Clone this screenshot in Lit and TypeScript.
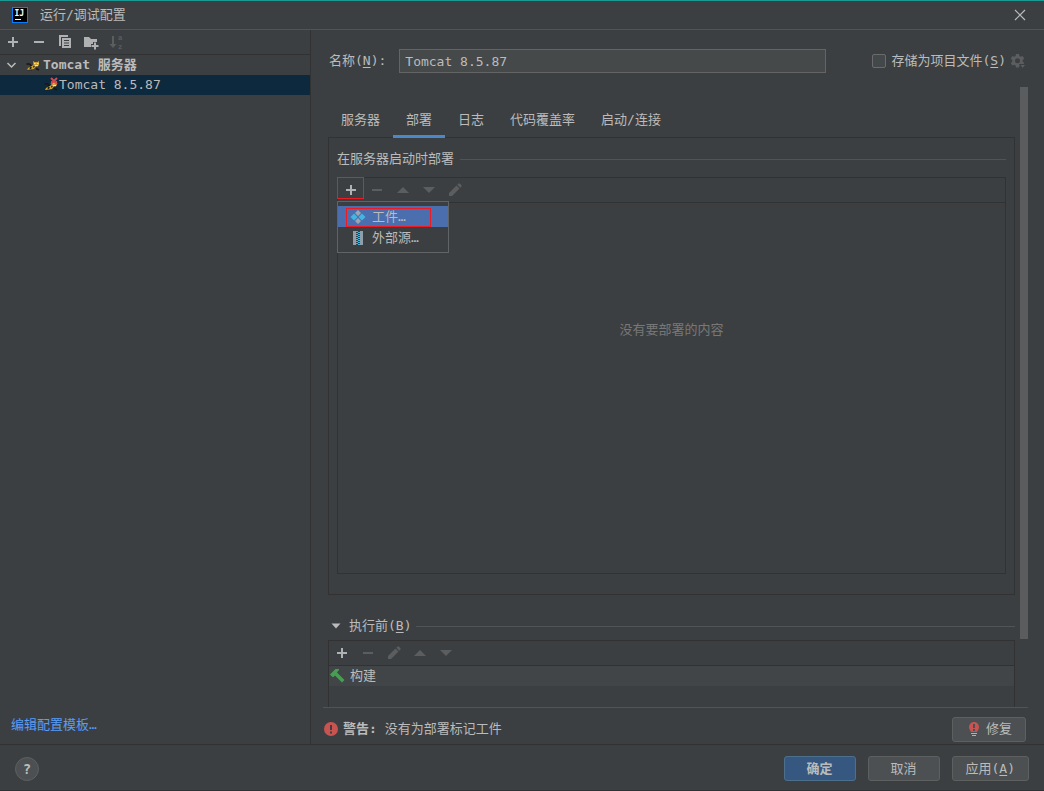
import { LitElement, html, css, svg } from "lit";
import { customElement, property, state } from "lit/decorators.js";
import { classMap } from "lit/directives/class-map.js";

const cat = svg`<path fill="none" stroke="#1b1710" stroke-width="1.500" d="M1.500 7h3l2 2M2 12.500h5M11 11.500l3 1.500"/><path fill="#cfa235" d="M8 4l1.500 1h3L14 4v4l-1.500 1.500H11L9 12l-3 .5-4 .5 1-2 4-2 1.500-1.500z"/><path fill="#2a2315" d="M5 9.500l2 1-1 1.500-1.500.3zM8 8.500l2 1-1.500 1.500z"/><path fill="#f4e6a6" d="M9 6h1.500v1H9zM12 6h1.500v1H12zM10 8h3v1h-3z"/>`;

const icons: Record<string, unknown> = {
  add: svg`<path fill="currentColor" d="M7 3h2v4h4v2H9v4H7V9H3V7h4z"/>`,
  remove: svg`<path fill="currentColor" d="M3 7h10v2H3z"/>`,
  up: svg`<path fill="currentColor" d="M2 11L8 5l6 6z"/>`,
  down: svg`<path fill="currentColor" d="M2 5h12l-6 6z"/>`,
  edit: svg`<path fill="currentColor" d="M2 14v-3l7.500-7.500 3 3L5 14zM10.300 2.700l1-1a1.200 1.200 0 0 1 1.700 0l1.300 1.300a1.200 1.200 0 0 1 0 1.700l-1 1z"/>`,
  copy: svg`<path fill="currentColor" d="M2 1h9v2H4v9H2z"/><path fill="currentColor" fill-rule="evenodd" d="M5 4h9v10H5zM7 6v1h5V6zM7 8.500v1h5v-1zM7 11v1h5v-1z"/>`,
  folder: svg`<path fill="currentColor" d="M1 3h5l2 2h6v3h-4v2H8v3H1z"/><path fill="currentColor" d="M11 8.500h2V11h2.500v2H13v2.500h-2V13H8.500v-2H11z"/>`,
  sort: svg`<path fill="currentColor" d="M3 2h2v8h2.500L4 14 .5 10H3z"/><text class="tiny" x="9" y="6">a</text><text class="tiny" x="9" y="15">z</text>`,
  close: svg`<path fill="none" stroke="currentColor" stroke-width="1.200" d="M3 3l10 10M13 3L3 13"/>`,
  chevron: svg`<path fill="none" stroke="currentColor" stroke-width="1.500" d="M3.500 6l4 4 4-4"/>`,
  expanded: svg`<path fill="currentColor" d="M3.500 5.500h9L8 10.500z"/>`,
  gear: svg`<path fill="currentColor" fill-rule="evenodd" d="M6 1h3l.4 2 1.300.8 2-.7 1.500 2.600-1.500 1.300v1.600l1.500 1.300-1.500 2.600-2-.7-1.300.8-.4 2H6l-.4-2-1.300-.8-2 .7L.8 9.900l1.500-1.300V7L.8 5.700l1.500-2.600 2 .7L5.600 3zM7.500 5.300a2.500 2.500 0 1 0 0 5 2.500 2.500 0 0 0 0-5z"/><path fill="currentColor" stroke="#3c3f41" d="M9.500 11.500h6.500L12.700 15.500z"/>`,
  artifact: svg`<path fill="#9aa7b0" d="M8 1l3 3-3 3-3-3zM8 9l3 3-3 3-3-3z"/><path fill="#40b6e0" d="M4 4.500L7.500 8 4 11.500.5 8zM12 4.500L15.500 8 12 11.500 8.500 8z"/>`,
  archive: svg`<path fill="#8f9ea8" d="M3 1h3v14H3zM10 1h3v14h-3z"/><path fill="#40b6e0" d="M6 1h2v1H6zM8 2h2v1H8zM6 3h2v1H6zM8 4h2v1H8zM6 5h2v1H6zM8 6h2v1H8zM6 7h2v1H6zM8 8h2v1H8zM6 9h2v1H6zM8 10h2v1H8zM6 11h2v1H6zM8 12h2v1H8zM6 13h2v1H6zM8 14h2v1H8z"/>`,
  hammer: svg`<path fill="#499c54" d="M1 6.500L6.500 1H10v1L8 4.500 15.500 12l-2.500 2.500L6 7.500 4.500 9H3.500z"/>`,
  error: svg`<circle cx="8" cy="8" r="7" fill="#c75450"/><path fill="#3c3f41" d="M7 4h2v5H7zM7 10.500h2v2H7z"/>`,
  bulb: svg`<path fill="#c75450" d="M8 1a5 5 0 0 1 5 5c0 2-1 3-2 5H5C4 9 3 8 3 6a5 5 0 0 1 5-5z"/><path fill="#4c5052" d="M7 3h2v4H7zM7 8h2v2H7z"/><path fill="#afb1b3" d="M5 12h6v1H5zM6 14h4v1H6z"/>`,
  tomcat: cat,
  tomcatBroken: svg`${cat}<path fill="none" stroke="#d9484c" stroke-width="2" d="M8 1l6 6M14 1L8 7"/>`,
};

const base = css`
  * { box-sizing: border-box; }
  button, input { font: inherit; color: inherit; margin: 0; }
  u { text-underline-offset: 2px; }
`;

@customElement("ide-icon")
export class IdeIcon extends LitElement {
  @property() name = "add";
  static styles = css`
    :host { display: inline-flex; flex: none; width: 16px; height: 16px; }
    svg { display: block; width: 16px; height: 16px; }
    .tiny { font: bold 7px "DejaVu Sans Mono", monospace; fill: currentColor; }
  `;
  render() {
    return html`<svg viewBox="0 0 16 16" aria-hidden="true">${icons[this.name]}</svg>`;
  }
}

interface Tool { icon: string; label: string; off?: boolean; }

@customElement("tool-strip")
export class ToolStrip extends LitElement {
  @property({ attribute: false }) tools: Tool[] = [];
  static styles = [base, css`
    :host { display: flex; height: 24px; }
    button { display: flex; align-items: center; justify-content: center; width: 26px; height: 24px; padding: 0; border: 0; background: none; color: #afb1b3; }
    button:disabled { color: #5b5d5f; }
  `];
  render() {
    return this.tools.map(t => html`<button aria-label=${t.label} ?disabled=${!!t.off}><ide-icon name=${t.icon}></ide-icon></button>`);
  }
}

@customElement("app-root")
export class AppRoot extends LitElement {
  @state() private tab = "部署";
  private tabs = ["服务器", "部署", "日志", "代码覆盖率", "启动/连接"];
  private sideTools: Tool[] = [
    { icon: "add", label: "添加" }, { icon: "remove", label: "移除" }, { icon: "copy", label: "复制" },
    { icon: "folder", label: "新建文件夹" }, { icon: "sort", label: "排序", off: true },
  ];
  private deployTools: Tool[] = [
    { icon: "add", label: "添加" }, { icon: "remove", label: "移除", off: true }, { icon: "up", label: "上移", off: true },
    { icon: "down", label: "下移", off: true }, { icon: "edit", label: "编辑", off: true },
  ];
  private taskTools: Tool[] = [
    { icon: "add", label: "添加" }, { icon: "remove", label: "移除", off: true }, { icon: "edit", label: "编辑", off: true },
    { icon: "up", label: "上移", off: true }, { icon: "down", label: "下移", off: true },
  ];

  static styles = [base, css`
    :host { display: block; }
    .dialog { display: flex; flex-direction: column; height: 100vh; min-height: 480px; background: #3c3f41; color: #bbbbbb; border-top: 1px solid #1a9a94; border-bottom: 1px solid #2f3133; font: 13px/20px "DejaVu Sans Mono", "Noto Sans CJK SC", monospace; white-space: nowrap; }
    .title { display: flex; align-items: center; height: 29px; padding: 0 16px 0 12px; gap: 12px; border-bottom: 1px solid #515355; }
    .title h1 { flex: 1; margin: 0; font: inherit; }
    .logo { width: 16px; height: 16px; display: block; }
    .logo text { font: bold 8px "DejaVu Sans Mono", monospace; fill: #ffffff; }
    .close { display: flex; padding: 0; border: 0; background: none; }
    .body { flex: 1; min-height: 0; display: flex; }
    .side { width: 311px; flex: none; display: flex; flex-direction: column; border-right: 1px solid #323232; }
    .side tool-strip { border-bottom: 1px solid #323232; height: 25px; }
    .tree { list-style: none; margin: 0; padding: 0; flex: 1; }
    .node { display: flex; align-items: center; height: 20px; padding-left: 4px; }
    .node.group { font-weight: bold; }
    .node.group ide-icon + ide-icon { margin: 0 2px 0 5px; }
    .node.leaf { padding-left: 43px; background: #0d293e; }
    a { color: #589df6; text-decoration: none; }
    .templates { margin: 0 0 9px 11px; align-self: flex-start; }
    .main { flex: 1; min-width: 0; display: flex; flex-direction: column; padding: 0 16px 0 12px; }
    .name { display: flex; align-items: center; padding: 19px 2px 14px 6px; }
    .name input[type="text"] { flex: 1; min-width: 0; height: 24px; margin: 0 46px 0 13px; padding: 0 5px; border: 1px solid #646464; background: #45494a; outline: 0; }
    .store { display: flex; align-items: center; gap: 6px; margin-right: 4px; }
    .store input { appearance: none; width: 14px; height: 14px; border: 1px solid #6b6b6b; border-radius: 2px; background: #43494a; }
    .name ide-icon { color: #5b5d5f; }
    .scroll { flex: 1; min-height: 0; display: flex; gap: 5px; padding-left: 5px; overflow: hidden; border-bottom: 1px solid #515355; }
    .content { flex: 1; min-width: 0; display: flex; flex-direction: column; padding-top: 15px; }
    .track { width: 8px; flex: none; }
    .thumb { height: 89%; background: #5a5c5d; }
    .tabs { display: flex; height: 36px; position: relative; }
    .tabs button { padding: 2px 13px 0; border: 0; border-bottom: 3px solid transparent; background: none; }
    .tabs .on { border-bottom-color: #4a88c7; }
    .panel { flex: 1; min-height: 200px; margin-top: -1px; display: flex; flex-direction: column; padding: 11px 8px 20px; border: 1px solid #323232; }
    .rule { display: flex; align-items: center; gap: 6px; height: 20px; }
    .rule::after { content: ""; flex: 1; height: 1px; background: #515355; }
    .rule h2 { margin: 0; font: inherit; }
    .box { border: 1px solid #323232; }
    .box tool-strip { border-bottom: 1px solid #323232; height: 25px; }
    .deploy { flex: 1; display: flex; flex-direction: column; position: relative; margin-top: 8px; }
    .empty { flex: 1; margin: 0; padding-top: 117px; text-align: center; color: #787878; }
    .mark { position: absolute; border: 1px solid #ed1c24; pointer-events: none; }
    .mark.plus { left: -1px; top: -1px; width: 27px; height: 22px; }
    .mark.item { left: 8px; top: 6px; width: 85px; height: 19px; }
    .menu { position: absolute; left: -1px; top: 23px; width: 112px; padding: 4px 0; border: 1px solid #616365; background: #3c3f41; }
    .menu button { display: flex; align-items: center; gap: 6px; width: 100%; height: 21px; padding: 0 12px; border: 0; background: none; }
    .menu .active { background: #4b6eaf; }
    .before { margin-top: 21px; gap: 5px; }
    .tasks { margin-top: 4px; height: 67px; border-bottom: 0; }
    .task { display: flex; align-items: center; gap: 5px; height: 20px; background: #414547; }
    .warn { display: flex; align-items: center; height: 36px; padding: 6px 2px 0 0; }
    .warn p { flex: 1; margin: 0 0 0 4px; }
    .push { display: flex; align-items: center; justify-content: center; gap: 4px; height: 25px; min-width: 72px; padding: 0 13px; border: 1px solid #5e6060; border-radius: 3px; background: #4c5052; }
    .ok { background: #365880; border-color: #4c708c; font-weight: bold; }
    .foot { display: flex; align-items: center; gap: 12px; height: 46px; padding: 2px 15px 0; border-top: 1px solid #323232; }
    .help { width: 24px; height: 24px; margin-right: auto; padding: 0; border: 1px solid #5e6060; border-radius: 50%; background: #4c5052; font-weight: bold; font-size: 14px; }
  `];

  render() {
    return html`
      <div class="dialog">
        <header class="title">
          <svg class="logo" viewBox="0 0 16 16" aria-hidden="true">
            <rect x=".5" y=".5" width="15" height="15" fill="#000" stroke="#087cfa"/>
            <text x="2.500" y="9">IJ</text><path fill="#fff" d="M3 12h6v1H3z"/>
          </svg>
          <h1>运行/调试配置</h1>
          <button class="close" aria-label="关闭"><ide-icon name="close"></ide-icon></button>
        </header>
        <div class="body">
          <aside class="side">
            <tool-strip .tools=${this.sideTools}></tool-strip>
            <ul class="tree">
              <li class="node group"><ide-icon name="chevron"></ide-icon><ide-icon name="tomcat"></ide-icon>Tomcat 服务器</li>
              <li class="node leaf"><ide-icon name="tomcatBroken"></ide-icon>Tomcat 8.5.87</li>
            </ul>
            <a class="templates" href="#templates">编辑配置模板…</a>
          </aside>
          <main class="main">
            <div class="name">
              <label for="name">名称(<u>N</u>):</label>
              <input id="name" type="text" .value=${"Tomcat 8.5.87"}>
              <label class="store"><input type="checkbox"><span>存储为项目文件(<u>S</u>)</span></label>
              <ide-icon name="gear"></ide-icon>
            </div>
            <div class="scroll">
              <div class="content">
                <nav class="tabs" role="tablist">
                  ${this.tabs.map(t => html`<button role="tab" aria-selected=${t === this.tab} class=${classMap({ on: t === this.tab })} @click=${() => (this.tab = t)}>${t}</button>`)}
                </nav>
                <section class="panel">
                  <div class="rule"><h2>在服务器启动时部署</h2></div>
                  <div class="box deploy">
                    <tool-strip .tools=${this.deployTools}></tool-strip>
                    <p class="empty">没有要部署的内容</p>
                    <span class="mark plus"></span>
                    <div class="menu" role="menu">
                      <button class="active" role="menuitem"><ide-icon name="artifact"></ide-icon>工件…</button>
                      <button role="menuitem"><ide-icon name="archive"></ide-icon>外部源…</button>
                      <span class="mark item"></span>
                    </div>
                  </div>
                </section>
                <div class="rule before"><ide-icon name="expanded"></ide-icon><h2>执行前(<u>B</u>)</h2></div>
                <div class="box tasks">
                  <tool-strip .tools=${this.taskTools}></tool-strip>
                  <div class="task"><ide-icon name="hammer"></ide-icon>构建</div>
                </div>
              </div>
              <div class="track"><div class="thumb"></div></div>
            </div>
            <div class="warn">
              <ide-icon name="error"></ide-icon>
              <p><b>警告:</b> 没有为部署标记工件</p>
              <button class="push"><ide-icon name="bulb"></ide-icon>修复</button>
            </div>
          </main>
        </div>
        <footer class="foot">
          <button class="help" aria-label="帮助">?</button>
          <button class="push ok">确定</button>
          <button class="push">取消</button>
          <button class="push"><span>应用(<u>A</u>)</span></button>
        </footer>
      </div>
    `;
  }
}
